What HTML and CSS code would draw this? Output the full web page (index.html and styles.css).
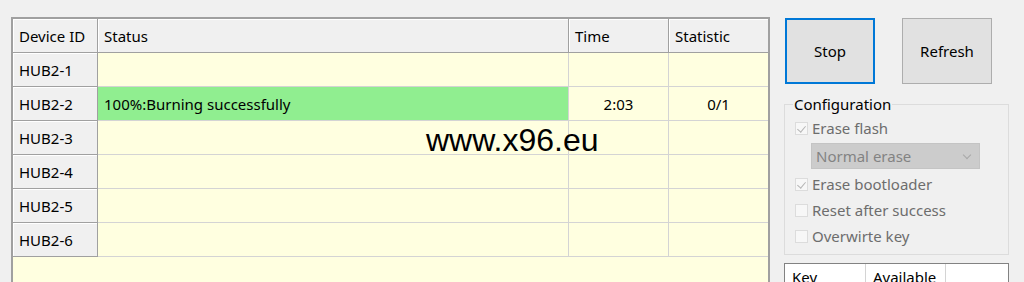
FILE: index.html
```html
<!DOCTYPE html>
<html>
<head>
<meta charset="UTF-8">
<title>Burner</title>
<link rel="stylesheet" href="styles.css">
</head>
<body>
<div class="app">
    <div class="devgrid">
        <div class="hd first">Device ID</div>
        <div class="hd">Status</div>
        <div class="hd">Time</div>
        <div class="hd last">Statistic</div>

        <div class="rh">HUB2-1</div>
        <div class="cell"></div>
        <div class="cell num"></div>
        <div class="cell num last"></div>

        <div class="rh">HUB2-2</div>
        <div class="cell ok">100%:Burning successfully</div>
        <div class="cell num">2:03</div>
        <div class="cell num last">0/1</div>

        <div class="rh">HUB2-3</div>
        <div class="cell"></div>
        <div class="cell num"></div>
        <div class="cell num last"></div>

        <div class="rh">HUB2-4</div>
        <div class="cell"></div>
        <div class="cell num"></div>
        <div class="cell num last"></div>

        <div class="rh">HUB2-5</div>
        <div class="cell"></div>
        <div class="cell num"></div>
        <div class="cell num last"></div>

        <div class="rh">HUB2-6</div>
        <div class="cell"></div>
        <div class="cell num"></div>
        <div class="cell num last"></div>
    </div>

    <div class="side">
        <div class="buttons">
            <button class="btn focus">Stop</button>
            <button class="btn">Refresh</button>
        </div>

        <fieldset class="config">
            <legend>Configuration</legend>
            <label class="chk"><span class="box checked"></span>Erase flash</label>
            <div class="combo">Normal erase<span class="arrow"></span></div>
            <label class="chk"><span class="box checked"></span>Erase bootloader</label>
            <label class="chk"><span class="box"></span>Reset after success</label>
            <label class="chk"><span class="box"></span>Overwirte key</label>
        </fieldset>

        <div class="keys">
            <div class="kh">Key</div>
            <div class="kh">Available</div>
            <div class="kh"></div>
        </div>
    </div>
</div>

<div class="watermark">www.x96.eu</div>
</body>
</html>
```

FILE: styles.css
```css
*{
    box-sizing: border-box;
}

html, body{
    margin: 0;
    height: 282px;
    overflow: hidden;
}

body{
    background-color: #f0f0f0;
    font-family: "Noto Sans", "Open Sans", sans-serif;
    font-size: 15px;
    color: #000;
    position: relative;
}

.app{
    display: flex;
    align-items: flex-start;
    padding: 17px 0 0 11px;
}

/* device list */
.devgrid{
    width: 759px;
    height: 300px;
    background-color: #ffffe0;
    border: 2px solid #a0a0a0;
    border-bottom: none;
    display: grid;
    grid-template-columns: 85px 471px 100px 99px;
    grid-auto-rows: 34px;
    align-content: start;
}

.hd, .rh, .cell{
    border-right: 1px solid #d4d4d4;
    border-bottom: 1px solid #d4d4d4;
    padding: 1px 6px 0;
    display: flex;
    align-items: center;
    white-space: nowrap;
}

.hd, .rh{
    background-color: #f0f0f0;
    border-right-color: #a0a0a0;
    border-bottom-color: #a0a0a0;
    box-shadow: inset 1px 1px 0 #fff;
}

.last{
    border-right: none;
}

.cell.num{
    justify-content: center;
}

.cell.ok{
    background-color: #90ee90;
}

/* right panel */
.side{
    margin-left: 14px;
    width: 225px;
}

.buttons{
    display: flex;
    gap: 27px;
    padding-left: 1px;
    margin-top: 1px;
}

.btn{
    width: 90px;
    height: 66px;
    background-color: #e1e1e1;
    border: 1px solid #adadad;
    font-family: inherit;
    font-size: 15px;
    color: #000;
    padding: 0;
}

.btn.focus{
    border: 2px solid #0078d7;
}

.config{
    margin: 12px 0 0 0;
    padding: 3px 0 5px 10px;
    border: 1px solid #dcdcdc;
    color: #6d6d6d;
}

.config legend{
    color: #000;
    padding: 0 1px;
    margin-left: -2px;
    line-height: 16px;
}

.chk{
    display: flex;
    align-items: center;
    height: 26px;
    white-space: nowrap;
}

.box{
    width: 13px;
    height: 13px;
    border: 1px solid #dcdcdc;
    background-color: #f7f7f7;
    margin-right: 4px;
    position: relative;
}

.box.checked::after{
    content: "";
    position: absolute;
    left: 3px;
    top: 1px;
    width: 4px;
    height: 7px;
    border-right: 1px solid #b5b5b5;
    border-bottom: 1px solid #b5b5b5;
    transform: rotate(40deg);
}

.combo{
    margin: 2px 0 2px 16px;
    width: 169px;
    height: 26px;
    background-color: #cccccc;
    border: 1px solid #c4c4c4;
    color: #838383;
    padding-left: 4px;
    display: flex;
    align-items: center;
    position: relative;
}

.arrow{
    position: absolute;
    right: 9px;
    top: 8px;
    width: 6px;
    height: 6px;
    border-right: 1px solid #a8a8a8;
    border-bottom: 1px solid #a8a8a8;
    transform: rotate(45deg);
}

.keys{
    margin-top: 8px;
    width: 225px;
    height: 40px;
    background-color: #fff;
    border: 1px solid #828282;
    display: grid;
    grid-template-columns: 81px 80px 1fr;
}

.kh{
    border-right: 1px solid #d4d4d4;
    padding: 2px 7px 0;
    line-height: 22px;
}

.kh:last-child{
    border-right: none;
}

.watermark{
    position: absolute;
    left: 426px;
    top: 121px;
    font-family: "Liberation Sans", Arial, sans-serif;
    font-size: 32px;
    color: #000;
    line-height: 38px;
}
```
